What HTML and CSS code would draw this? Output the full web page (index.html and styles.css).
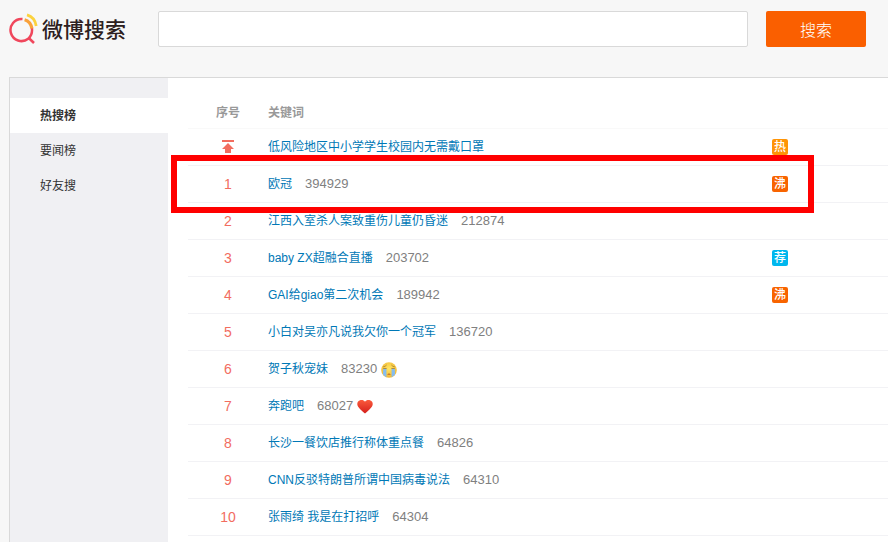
FILE: index.html
```html
<!DOCTYPE html>
<html lang="zh-CN">
<head>
    <meta charset="UTF-8">
    <meta name="viewport" content="width=device-width, initial-scale=1.0">
    <title>微博搜索</title>
    <link rel="stylesheet" href="styles.css">
</head>
<body>
    <header class="header">
        <a class="logo" href="#">
            <svg class="logo-icon" viewBox="0 0 30 32" width="30" height="32" fill="none">
                <path d="M13.5 6.1A11 11 0 1 0 19.2 25.8Q24 21.5 22.8 14.5" stroke="#f0475c" stroke-width="2.5"/>
                <path d="M19.2 24.5L25 30" stroke="#f0475c" stroke-width="2.5"/>
                <path d="M15.6 6.8Q21.5 8.4 22.9 15.5" stroke="#f9a13a" stroke-width="3.2"/>
                <path d="M18 1.8Q26 4.2 27.2 13" stroke="#fbd23e" stroke-width="2.8"/>
            </svg>
            <span class="logo-text">微博搜索</span>
        </a>
        <form class="search">
            <input class="search-input" type="text" aria-label="搜索关键词">
            <button class="search-btn" type="button">搜索</button>
        </form>
    </header>

    <div class="wrap">
        <nav class="menu">
            <a class="menu-item active" href="#">热搜榜</a>
            <a class="menu-item" href="#">要闻榜</a>
            <a class="menu-item" href="#">好友搜</a>
        </nav>

        <main class="content">
            <table class="list">
                <thead>
                    <tr>
                        <th class="rank">序号</th>
                        <th class="keyword">关键词</th>
                        <th class="tag"></th>
                    </tr>
                </thead>
                <tbody>
                    <tr>
                        <td class="rank">
                            <svg class="top-icon" viewBox="0 0 12 16" width="12" height="16" fill="#f26d5f">
                                <path d="M0 1h12v2H0zM6 4l6 6H9v4H3v-4H0z"/>
                            </svg>
                        </td>
                        <td class="keyword"><a href="#">低风险地区中小学学生校园内无需戴口罩</a></td>
                        <td class="tag"><i class="badge hot">热</i></td>
                    </tr>
                    <tr>
                        <td class="rank">1</td>
                        <td class="keyword"><a href="#">欧冠</a><span class="num">394929</span></td>
                        <td class="tag"><i class="badge boil">沸</i></td>
                    </tr>
                    <tr>
                        <td class="rank">2</td>
                        <td class="keyword"><a href="#">江西入室杀人案致重伤儿童仍昏迷</a><span class="num">212874</span></td>
                        <td class="tag"></td>
                    </tr>
                    <tr>
                        <td class="rank">3</td>
                        <td class="keyword"><a href="#">baby ZX超融合直播</a><span class="num">203702</span></td>
                        <td class="tag"><i class="badge rec">荐</i></td>
                    </tr>
                    <tr>
                        <td class="rank">4</td>
                        <td class="keyword"><a href="#">GAI给giao第二次机会</a><span class="num">189942</span></td>
                        <td class="tag"><i class="badge boil">沸</i></td>
                    </tr>
                    <tr>
                        <td class="rank">5</td>
                        <td class="keyword"><a href="#">小白对吴亦凡说我欠你一个冠军</a><span class="num">136720</span></td>
                        <td class="tag"></td>
                    </tr>
                    <tr>
                        <td class="rank">6</td>
                        <td class="keyword">
                            <a href="#">贺子秋宠妹</a><span class="num">83230</span>
                            <svg class="emoji" viewBox="0 0 16 16" width="16" height="16">
                                <defs>
                                    <radialGradient id="face" cx="0.5" cy="0.4" r="0.6">
                                        <stop offset="0" stop-color="#ffe766"/>
                                        <stop offset="1" stop-color="#f2b632"/>
                                    </radialGradient>
                                </defs>
                                <circle cx="8" cy="8" r="7.8" fill="url(#face)"/>
                                <path d="M2.2 6.5h3.2v8.7Q3.4 14.4 2 12.5zM10.6 6.5h3.2l.2 6Q12.6 14.4 10.6 15.2z" fill="#85bdf0"/>
                                <path d="M2.2 4.8Q4.4 4.6 5.6 3M13.8 4.8Q11.6 4.6 10.4 3M2.2 6.5h3.4M10.4 6.5h3.4" fill="none" stroke="#a67c2c" stroke-width="0.8"/>
                                <path d="M6.2 12.8Q8 10 9.8 12.8z" fill="#b9652a"/>
                            </svg>
                        </td>
                        <td class="tag"></td>
                    </tr>
                    <tr>
                        <td class="rank">7</td>
                        <td class="keyword">
                            <a href="#">奔跑吧</a><span class="num">68027</span>
                            <svg class="emoji" viewBox="0 0 16 16" width="16" height="16">
                                <defs>
                                    <linearGradient id="heart" x1="0" y1="0" x2="0" y2="1">
                                        <stop offset="0" stop-color="#fa5a3c"/>
                                        <stop offset="1" stop-color="#d5201c"/>
                                    </linearGradient>
                                </defs>
                                <path d="M8 2.8C6.8.4 2.6.2.9 2.8-.9 6 1.2 9 8 14.4 14.8 9 16.9 6 15.1 2.8 13.4.2 9.2.4 8 2.8z" fill="url(#heart)"/>
                            </svg>
                        </td>
                        <td class="tag"></td>
                    </tr>
                    <tr>
                        <td class="rank">8</td>
                        <td class="keyword"><a href="#">长沙一餐饮店推行称体重点餐</a><span class="num">64826</span></td>
                        <td class="tag"></td>
                    </tr>
                    <tr>
                        <td class="rank">9</td>
                        <td class="keyword"><a href="#">CNN反驳特朗普所谓中国病毒说法</a><span class="num">64310</span></td>
                        <td class="tag"></td>
                    </tr>
                    <tr>
                        <td class="rank">10</td>
                        <td class="keyword"><a href="#">张雨绮 我是在打招呼</a><span class="num">64304</span></td>
                        <td class="tag"></td>
                    </tr>
                </tbody>
            </table>
            <div class="highlight"></div>
        </main>
    </div>
</body>
</html>
```
FILE: styles.css
```css
* {
    box-sizing: border-box;
}
body {
    margin: 0;
    min-height: 100vh;
    display: flex;
    flex-direction: column;
    background-color: #f7f7f7;
    color: #333;
    font-family: "Liberation Sans", "Noto Sans CJK SC", sans-serif;
    font-size: 12px;
}
a {
    text-decoration: none;
}
/* Header */
.header {
    display: flex;
    padding: 11px 22px 30px 9px;
}
.logo {
    display: flex;
    align-items: center;
    gap: 3px;
    width: 149px;
    height: 36px;
}
.logo-icon {
    flex: none;
}
.logo-text {
    padding-top: 2px;
    color: #2d2020;
    font-size: 21px;
    font-weight: 500;
    line-height: 36px;
    white-space: nowrap;
}
.search {
    flex: 1;
    display: flex;
    gap: 18px;
}
.search-input {
    flex: 1;
    min-width: 0;
    height: 36px;
    padding: 0 10px;
    border: 1px solid #d9d9d9;
    border-radius: 2px;
    background-color: #fff;
    font-size: 14px;
}
.search-btn {
    width: 100px;
    height: 36px;
    padding: 0;
    border: 0;
    border-radius: 2px;
    background-color: #fa5f00;
    color: #fff;
    font-family: inherit;
    font-size: 16px;
    font-weight: 300;
    cursor: pointer;
}
/* Page body */
.wrap {
    flex: 1;
    display: flex;
    margin-left: 9px;
    border-top: 1px solid #d9d9d9;
    border-left: 1px solid #d9d9d9;
    background-color: #fff;
}
.menu {
    width: 158px;
    padding-top: 20px;
    background-color: #f0f0f3;
}
.menu-item {
    display: block;
    padding: 2px 0 0 30px;
    color: #333;
    line-height: 33px;
}
.menu-item.active {
    background-color: #fff;
    font-weight: bold;
}
.content {
    position: relative;
    flex: 1;
    padding: 20px 0 6px 20px;
}
/* Ranking table */
.list {
    width: 100%;
    border-collapse: separate;
    border-spacing: 0;
    table-layout: fixed;
}
.list th {
    height: 31px;
    padding: 0 0 4px;
    border-bottom: 1px solid #f9f9f9;
    color: #999;
    text-align: left;
}
.list td {
    height: 37px;
    padding: 0;
    border-bottom: 1px solid #f2f2f5;
    line-height: 20px;
}
.list .rank {
    width: 80px;
    text-align: center;
}
.list td.rank {
    color: #f26d5f;
    font-size: 14px;
}
.list .tag {
    width: 116px;
}
.top-icon {
    display: block;
    margin: 0 auto;
}
.keyword a {
    color: #0078b6;
}
.num {
    margin-left: 13px;
    color: #808080;
    font-size: 13px;
}
.emoji {
    vertical-align: middle;
}
.badge {
    display: block;
    width: 16px;
    height: 16px;
    border-radius: 2px;
    color: #fff;
    font-size: 12px;
    font-style: normal;
    font-weight: 500;
    line-height: 16px;
    text-align: center;
}
.hot {
    background-color: #ff9406;
}
.boil {
    background-color: #f86400;
}
.rec {
    background-color: #00b7ee;
}
/* Red frame around the first place */
.highlight {
    position: absolute;
    top: 77px;
    left: 3px;
    right: 74px;
    height: 58px;
    border: 6px solid #f00;
    pointer-events: none;
}
```
